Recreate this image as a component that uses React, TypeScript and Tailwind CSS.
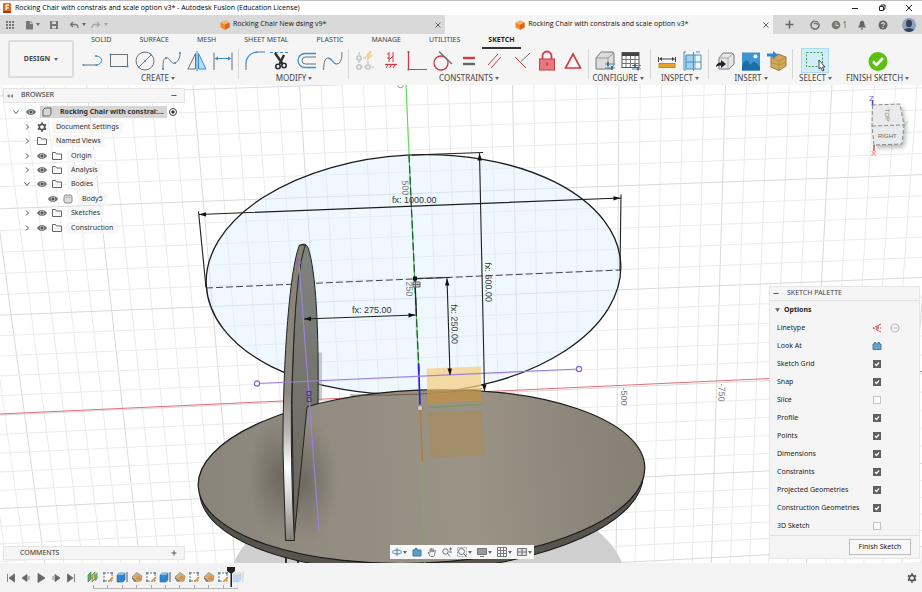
import { useState } from "react";
import type { ReactNode } from "react";
import clsx from "clsx";

const BLUE = "#3b8fd0";
const GRAY = "#6b7075";
const RED = "#cf3a43";

function Caret({ className }: { className?: string }) {
  return (
    <svg viewBox="0 0 4 3" className={clsx("shrink-0", className ?? "h-[3px] w-1")} fill="#666" aria-hidden="true">
      <path d="M0 0h4L2 3z" />
    </svg>
  );
}

function Dot({ x, y, c = BLUE }: { x: number; y: number; c?: string }) {
  return <circle cx={x} cy={y} r="1.1" fill={c} stroke="none" />;
}

const toolIcons: Record<string, ReactNode> = {
  line: (
    <>
      <path d="M1.5 15H14.5" stroke={GRAY} />
      <path d="M14.5 15C21 14 22 7 14 6" stroke={BLUE} />
      <Dot x={1.5} y={15} />
      <Dot x={14.5} y={15} />
      <Dot x={14} y={6} />
    </>
  ),
  rectangle: (
    <>
      <rect x="2.5" y="4.5" width="17" height="12" stroke={GRAY} />
      <Dot x={2.5} y={4.5} />
      <Dot x={19.5} y={16.5} />
    </>
  ),
  circle: (
    <>
      <circle cx="11" cy="11" r="9" stroke={GRAY} />
      <path d="M5 17L17 5" stroke={BLUE} />
      <Dot x={5} y={17} />
      <Dot x={11} y={11} />
      <Dot x={17} y={5} />
    </>
  ),
  spline: (
    <>
      <path d="M3 19C3 13 3 9 6 8C10 7 11 15 15 13C19 11 20 7 20 3" stroke={GRAY} />
      <Dot x={3} y={19} />
      <Dot x={6} y={8} />
      <Dot x={15} y={13} />
      <Dot x={20} y={3} />
    </>
  ),
  mirror: (
    <>
      <path d="M9.5 3.5V19H2z" stroke={GRAY} />
      <path d="M12.5 3.5V19H20z" stroke={BLUE} fill="#b9dcf3" />
      <path d="M11 1V21" stroke={BLUE} />
    </>
  ),
  dimension: (
    <>
      <path d="M2 2.5V20M20 2.5V20" stroke={GRAY} />
      <path d="M3 8.5H19" stroke={BLUE} />
      <path d="M2.5 8.5L6 6.5V10.5zM19.5 8.5L16 6.5V10.5z" fill={BLUE} />
    </>
  ),
  fillet: (
    <>
      <path d="M2 20V14" stroke={GRAY} />
      <path d="M2 14C2 7 7 2 14 2" stroke={BLUE} strokeWidth="1.3" />
      <path d="M14 2H21" stroke={GRAY} />
    </>
  ),
  trim: (
    <>
      <path d="M0 2.5H20" stroke={BLUE} strokeDasharray="3 2" />
      <path d="M5 3L13 14.5M14 5L9.5 14" stroke="#2d2d2d" strokeWidth="2.4" />
      <circle cx="8" cy="16.5" r="2.2" stroke="#2d2d2d" strokeWidth="1.6" />
      <circle cx="14" cy="15.5" r="2.2" stroke="#2d2d2d" strokeWidth="1.6" />
    </>
  ),
  offset: (
    <>
      <path d="M20 3.5H9a7 7 0 0 0 0 14H20" stroke={BLUE} strokeWidth="1.3" />
      <path d="M20 7H9.5a3.5 3.5 0 0 0 0 7H20" stroke={GRAY} />
    </>
  ),
  curve: (
    <>
      <path d="M1.5 20C2 12 3 8 6 8" stroke={GRAY} />
      <path d="M6 8C10 8 11 14 14.5 14" stroke={BLUE} strokeWidth="1.3" />
      <path d="M14.5 14C19 14 20 8 20 2" stroke={GRAY} />
    </>
  ),
  autoConstrain: (
    <g opacity="0.45">
      <path d="M5 2V20M2 17H20M5 8H14V17" stroke={GRAY} strokeDasharray="3 1" />
      <path d="M3 6h4v4H3zM3 15h4v4H3zM12 15h4v4h-4z" stroke={GRAY} fill="#e5e5e5" />
      <path d="M15 1L11 7H14L12 12L19 5H16L18 1z" fill="#f0b429" />
    </g>
  ),
  vertical: (
    <>
      <path d="M9 2V12M13 2V12M9 4H7M9 8H7M13 6L9 10" stroke={RED} />
      <path d="M5 14.5H17" stroke={RED} strokeWidth="1.3" />
      <path d="M6 18L8 15M9.5 18L11.5 15M13 18L15 15" stroke={RED} />
    </>
  ),
  coincident: (
    <>
      <path d="M2.5 2V19.5" stroke={RED} strokeWidth="1.3" />
      <path d="M2.5 19.5H21" stroke={GRAY} />
      <Dot x={2.5} y={2} c={RED} />
      <Dot x={2.5} y={19.5} c={GRAY} />
    </>
  ),
  tangent: (
    <>
      <circle cx="9" cy="13" r="7" stroke={RED} strokeWidth="1.3" />
      <path d="M7 1.5L20 14" stroke={GRAY} strokeWidth="1.3" />
    </>
  ),
  equal: (
    <>
      <path d="M5 8H17" stroke={RED} strokeWidth="2.4" />
      <path d="M5 14H17" stroke="#666" strokeWidth="2.4" />
    </>
  ),
  parallel: (
    <>
      <path d="M4 15L14 4" stroke={RED} />
      <path d="M7 18L17 7" stroke={RED} />
    </>
  ),
  perpendicular: (
    <>
      <path d="M20 3L11 11.5" stroke={GRAY} />
      <path d="M5 7L16 18" stroke={RED} />
    </>
  ),
  lock: (
    <>
      <path d="M6.5 9V6a4.5 4.5 0 0 1 9 0V9" stroke={RED} strokeWidth="1.8" />
      <rect x="3.5" y="9" width="15" height="11" fill="#e77880" stroke={RED} />
      <path d="M11 12V16" stroke={RED} strokeWidth="1.4" />
    </>
  ),
  symmetry: <path d="M11 4L18.5 18H3.5z" stroke={RED} strokeWidth="1.6" />,
  configure: (
    <>
      <path d="M2 8L7 2H19L20 4V15L17 19H2z" fill="#dcdddf" stroke="#777" />
      <path d="M2 8H14V19M14 8L19.5 3" stroke="#999" />
      <path d="M11 14H21M11 18H21" stroke={BLUE} />
      <path d="M14 12V16M18 16V20" stroke="#444" strokeWidth="1.3" />
    </>
  ),
  table: (
    <>
      <rect x="2" y="2.5" width="17" height="15" fill="#fff" stroke="#555" />
      <path d="M2 4.5H19" stroke="#444" strokeWidth="3" />
      <path d="M2 9.5H19M2 13.5H19M6 6V17M10.5 6V17M15 6V17" stroke="#777" />
      <path d="M12 15.5H21M12 19H21" stroke={BLUE} />
      <path d="M15 14V17M18 17.5V20.5" stroke="#444" strokeWidth="1.3" />
    </>
  ),
  measure: (
    <>
      <path d="M2.5 7V12M19.5 7V12M4 9H18" stroke="#444" />
      <path d="M3 9L6 7V11zM19 9L16 7V11z" fill="#444" />
      <rect x="3" y="13.5" width="16" height="4" fill="#e8a62d" stroke="#c98716" />
    </>
  ),
  section: (
    <>
      <path d="M3 5H11V19H3zM11 5H14V19H11z" fill="#9fd0ee" />
      <path d="M4 5H19V19H4zM11.5 2V21M4 12H19" stroke="#4d8fb8" />
      <path d="M4 2H2V20H4M14 2H18" stroke={BLUE} />
    </>
  ),
  derive: (
    <>
      <path d="M5 8L9 3H18L20 5V14L15 19H5z" fill="#e6e7e9" stroke="#777" />
      <path d="M5 8H14L19.5 3.5M14 8V18.5" stroke="#aaa" />
      <path d="M2 17C2 14 4 12.5 7 12.5V10L12 14L7 18V15.5C5 15.5 3 16 2 17z" fill="#222" />
    </>
  ),
  picture: (
    <>
      <rect x="2" y="2.5" width="18" height="18" fill="#3f95d3" />
      <path d="M2 16C5 9 8 9 10 15L13 12C15 11 17 14 20 17V20.5H2z" fill="#1d6ca8" />
      <circle cx="15.5" cy="6.5" r="2" fill="#fff" />
    </>
  ),
  insertBox: (
    <>
      <path d="M5 7L12 4L20 7V16L13 20.5L5 17z" fill="#d3a95a" stroke="#9d7631" />
      <path d="M5 7.5L13 11L20 7.5M13 11V20M5 12L13 15.5L20 12" stroke="#b98d42" />
      <path d="M1 3.5H7V1L12 5L7 9V6.5H1z" fill="#2788d8" />
    </>
  ),
  select: (
    <>
      <rect x="2.5" y="2.5" width="16" height="14" stroke="#3c9d5d" strokeDasharray="2 1.5" />
      <path d="M15 10V19L17 17.5L18.5 21L20 20.2L18.5 17H21z" fill="#fff" stroke="#333" strokeWidth="0.9" />
    </>
  ),
  finish: (
    <>
      <circle cx="11" cy="11.5" r="9.5" fill="#5cc010" />
      <path d="M6 11.5L9.5 15L16 8" stroke="#fff" strokeWidth="2.6" />
    </>
  ),
};

const groups = [
  { label: "Create", tools: ["line", "rectangle", "circle", "spline", "mirror", "dimension"] },
  { label: "Modify", tools: ["fillet", "trim", "offset", "curve"] },
  {
    label: "Constraints",
    tools: ["autoConstrain", "vertical", "coincident", "tangent", "equal", "parallel", "perpendicular", "lock", "symmetry"],
  },
  { label: "Configure", tools: ["configure", "table"], className: "pr-1" },
  { label: "Inspect", tools: ["measure", "section"] },
  { label: "Insert", tools: ["derive", "picture", "insertBox"] },
  { label: "Select", tools: ["select"], className: "ml-[3px]" },
  { label: "Finish Sketch", tools: ["finish"], className: "ml-3.5", plain: true },
];

const workspaceTabs = ["Solid", "Surface", "Mesh", "Sheet Metal", "Plastic", "Manage", "Utilities", "Sketch"];

function CubeLogo() {
  return (
    <svg viewBox="0 0 10 10" className="size-[10px] shrink-0" aria-hidden="true">
      <path d="M5 0.5L9.5 2.5V7.5L5 9.8L0.5 7.5V2.5z" fill="#f08a2c" />
      <path d="M5 0.5L9.5 2.5L5 4.7L0.5 2.5z" fill="#f9b56a" />
      <path d="M5 4.7L9.5 2.5V7.5L5 9.8z" fill="#d9651a" />
    </svg>
  );
}

function TitleBar() {
  return (
    <header className="flex h-[15px] shrink-0 items-center border-t border-[#bdbdbd] bg-white pl-[3px] text-black">
      <svg viewBox="0 0 8 10" className="h-[10px] w-2" aria-hidden="true">
        <rect width="8" height="10" rx="1" fill="#e8651a" />
        <path d="M2.5 1.5H6V3H4V4.2H5.7V5.6H4V7H2.5z" fill="#fff" />
        <path d="M0 8H8V9a1 1 0 0 1-1 1H1a1 1 0 0 1-1-1z" fill="#9c3d0c" />
      </svg>
      <h1 className="ml-1 flex-1 whitespace-nowrap font-['Open_Sans',sans-serif] text-[7px]">
        Rocking Chair with constrais and scale option v3* - Autodesk Fusion (Education License)
      </h1>
      <div className="flex">
        <button aria-label="Minimize" className="flex h-3 w-[27px] items-center justify-center">
          <svg viewBox="0 0 8 8" className="size-2" stroke="#222"><path d="M1 4.5H7" /></svg>
        </button>
        <button aria-label="Restore" className="flex h-3 w-[27px] items-center justify-center">
          <svg viewBox="0 0 8 8" className="size-2" fill="none" stroke="#222"><path d="M1.5 2.5H5.5V6.5H1.5zM3 2.5V1H7V5H5.5" /></svg>
        </button>
        <button aria-label="Close" className="flex h-3 w-[27px] items-center justify-center">
          <svg viewBox="0 0 8 8" className="size-2" stroke="#222"><path d="M1 1L7 7M7 1L1 7" /></svg>
        </button>
      </div>
    </header>
  );
}

function DocumentTab({ name, active }: { name: string; active?: boolean }) {
  return (
    <div className={clsx("flex flex-1 items-center", active ? "bg-[#f5f5f5]" : "bg-[#d9d9d9]")}>
      <button className="flex flex-1 items-center justify-center gap-[3px] whitespace-nowrap font-['Open_Sans',sans-serif] text-[7px] text-[#111]">
        <CubeLogo />
        {name}
      </button>
      <button aria-label={`Close ${name}`} className="flex w-[14px] justify-center">
        <svg viewBox="0 0 6 6" className="size-[6px]" stroke="#666"><path d="M0.5 0.5L5.5 5.5M5.5 0.5L0.5 5.5" /></svg>
      </button>
    </div>
  );
}

function TabBar() {
  return (
    <div className="flex h-[19px] shrink-0 items-stretch bg-[#d9d9d9]">
      <div className="flex w-[116px] items-center pl-[5px]">
        <button aria-label="Data panel" className="mr-[9px]">
          <svg viewBox="0 0 10 10" className="size-[10px]" fill="#777">
            <path d="M1 1h2v2H1zM4 1h2v2H4zM7 1h2v2H7zM1 4h2v2H1zM4 4h2v2H4zM7 4h2v2H7zM1 7h2v2H1zM4 7h2v2H4zM7 7h2v2H7z" />
          </svg>
        </button>
        <button aria-label="File" className="mr-[9px] flex items-center gap-0.5">
          <svg viewBox="0 0 10 10" className="size-[10px]" fill="#777"><path d="M2 1H6V4H9V9.5H2z" /><path d="M6.8 1L9 3.2H6.8z" /></svg>
          <Caret />
        </button>
        <button aria-label="Save" className="mr-[10px]">
          <svg viewBox="0 0 10 10" className="size-[10px]" fill="#777"><path fillRule="evenodd" d="M1 1H9V9H1zM3 1.5V4H7V1.5zM3 6V8.5H7V6z" /></svg>
        </button>
        <button aria-label="Undo" className="mr-[5px] flex items-center gap-[3px]">
          <svg viewBox="0 0 10 10" className="size-[10px]" fill="none" stroke="#777" strokeWidth="1.3"><path d="M4 2L1.5 4.5L4 7M2 4.5H6C8 4.5 9 6 9 8" /></svg>
          <Caret />
        </button>
        <button aria-label="Redo" className="flex items-center gap-[3px] opacity-50">
          <svg viewBox="0 0 10 10" className="size-[10px]" fill="none" stroke="#777" strokeWidth="1.3"><path d="M6 2L8.5 4.5L6 7M8 4.5H4C2 4.5 1 6 1 8" /></svg>
          <Caret />
        </button>
      </div>
      <DocumentTab name="Rocking Chair New dsing v9*" />
      <DocumentTab name="Rocking Chair with constrais and scale option v3*" active />
      <div className="flex w-[149px] items-center justify-between pr-[6px] pl-3">
        <button aria-label="New design">
          <svg viewBox="0 0 9 9" className="size-[9px]" stroke="#666" strokeWidth="1.6"><path d="M4.5 0.5V8.5M0.5 4.5H8.5" /></svg>
        </button>
        <button aria-label="Extensions" className="ml-1.5">
          <svg viewBox="0 0 10 10" className="size-[10px]" fill="none" stroke="#6e6e6e" strokeWidth="1.6"><path d="M4 1.2A4 4 0 1 0 8.9 4" /><path d="M4 4A2 2 0 0 1 7.5 5M4 1.2L7 1.5L8.9 4" strokeWidth="1.2" /></svg>
        </button>
        <button aria-label="Job status" className="flex items-center gap-0.5 text-[8px] text-[#666]">
          <svg viewBox="0 0 10 10" className="size-[10px]"><circle cx="5" cy="5" r="4.3" fill="#777" /><path d="M5 2.5V5.5H7.5" stroke="#ddd" fill="none" /></svg>
          1
        </button>
        <button aria-label="Notifications">
          <svg viewBox="0 0 10 10" className="size-[10px]" fill="#666"><path d="M5 0.5C7 1 7.5 2.5 7.5 5L9 7.5H1L2.5 5C2.5 2.5 3 1 5 0.5zM4 8.2H6V9.5H4z" /></svg>
        </button>
        <button aria-label="Help">
          <svg viewBox="0 0 10 10" className="size-[10px]"><circle cx="5" cy="5" r="4.5" fill="#666" /><path d="M3.5 4C3.5 2.2 6.5 2.2 6.5 4C6.5 5 5 5 5 6.2M5 7V8" stroke="#fff" fill="none" /></svg>
        </button>
        <button aria-label="Account" className="ml-1">
          <svg viewBox="0 0 14 14" className="size-[14px]"><circle cx="7" cy="7" r="7" fill="#8fa3bb" /><ellipse cx="7" cy="5.5" rx="3" ry="3.7" fill="#34435a" /><path d="M2 12C3 9.5 11 9.5 12 12C9 14.5 5 14.5 2 12z" fill="#34435a" /></svg>
        </button>
      </div>
    </div>
  );
}

function Ribbon() {
  const [tab, setTab] = useState("Sketch");
  return (
    <div className="flex h-[51px] shrink-0 bg-[#f5f5f5] pl-2 text-[#444]">
      <button className="mt-1.5 flex h-[38px] w-[66px] shrink-0 items-center justify-center gap-1 rounded-xs border-2 border-[#dcdcdc] text-[7px] font-bold">
        DESIGN
        <Caret />
      </button>
      <div className="ml-1.5 flex flex-1 flex-col">
        <nav className="flex h-[15px] gap-4 pl-[5px]">
          {workspaceTabs.map((name) => (
            <button
              key={name}
              onClick={() => setTab(name)}
              className={clsx(
                "border-b-2 px-1.5 text-[7px] whitespace-nowrap uppercase",
                tab === name ? "border-[#333] font-bold text-[#222]" : "border-transparent"
              )}
            >
              {name}
            </button>
          ))}
        </nav>
        <div className="flex">
          {groups.map((g, i) => (
            <div key={g.label} className="flex">
              {i > 0 && !g.plain && <div className="mr-[3px] ml-0.5 h-[30px] w-px bg-[#d5d5d5]" />}
              <div className={clsx("flex flex-col items-center", g.className)}>
                <div className="flex">
                  {g.tools.map((tool) => (
                    <button
                      key={tool}
                      aria-label={tool}
                      className={clsx("flex h-[23px] w-[26px] items-center justify-center", tool === "select" && "bg-[#d3edf6] outline outline-[#a9dcee]")}
                    >
                      <svg viewBox="0 0 22 22" className="size-[22px]" fill="none">{toolIcons[tool]}</svg>
                    </button>
                  ))}
                </div>
                <button className="flex h-3 items-center gap-0.5 text-[8px] whitespace-nowrap uppercase">
                  {g.label}
                  <Caret />
                </button>
              </div>
            </div>
          ))}
        </div>
      </div>
    </div>
  );
}

// Sketch plane grid, drawn as two families of nearly parallel lines.
const gridColumns = Array.from({ length: 50 }, (_, i) => {
  const k = i - 22;
  const top = 406 + 21.3 * k;
  return { k, d: `M${top} 84L${top + (0.041 - 0.0047 * k) * 486} 570` };
});
const gridRows = Array.from({ length: 30 }, (_, i) => {
  const k = i - 11;
  const mid = 396 - 19 * k - 0.13 * k * k;
  const slope = -0.045 + 0.0008 * k;
  return { k, d: `M-10 ${mid - slope * 424}L932 ${mid + slope * 518}` };
});

function Viewport() {
  return (
    <svg viewBox="0 84 922 479" preserveAspectRatio="xMidYMid slice" className="absolute inset-0 size-full bg-white" fill="none" role="img" aria-label="Rocking chair sketch">
      <defs>
        <linearGradient id="disk" x1="200" x2="645" y1="480" y2="470" gradientUnits="userSpaceOnUse">
          <stop offset="0" stopColor="#8a857a" />
          <stop offset="0.25" stopColor="#918b80" />
          <stop offset="0.6" stopColor="#9a9386" />
          <stop offset="1" stopColor="#857f74" />
        </linearGradient>
        <radialGradient id="contact" cx="0.5" cy="0.5" r="0.5">
          <stop offset="0" stopColor="#4d4842" stopOpacity="0.45" />
          <stop offset="1" stopColor="#4d4842" stopOpacity="0" />
        </radialGradient>
        <linearGradient id="edge" x1="0" x2="0" y1="244" y2="540" gradientUnits="userSpaceOnUse">
          <stop offset="0" stopColor="#857f74" />
          <stop offset="0.5" stopColor="#8f8a80" />
          <stop offset="0.64" stopColor="#bdb9b3" />
          <stop offset="0.75" stopColor="#ffffff" />
          <stop offset="0.84" stopColor="#dedbd8" />
          <stop offset="1" stopColor="#827c72" />
        </linearGradient>
        <linearGradient id="side" x1="0" x2="0" y1="244" y2="540" gradientUnits="userSpaceOnUse">
          <stop offset="0" stopColor="#7f847f" />
          <stop offset="0.5" stopColor="#74736c" />
          <stop offset="1" stopColor="#67635c" />
        </linearGradient>
      </defs>

      {[...gridColumns, ...gridRows].map((line, i) => (
        <path key={i} d={line.d} stroke={line.k % 5 === 0 ? "#dadada" : "#ebebeb"} />
      ))}
      <ellipse cx="428" cy="582" rx="198" ry="100" fill="#cfcfcf" />
      <path d="M0 413.5L922 371" stroke="#e27076" />

      {/* sketch profile */}
      <ellipse cx="413.5" cy="274" rx="207.5" ry="119.5" transform="rotate(-3 413.5 274)" fill="#d9eefc" fillOpacity="0.42" stroke="#1d1d1d" strokeWidth="1.3" />
      <path d="M206 287.5L620 269.5" stroke="#444" strokeDasharray="7 3" />

      {/* seat */}
      <path d="M286 555V570M298 555V570" stroke="#333" strokeWidth="2" />
      <ellipse cx="421.5" cy="482.5" rx="222" ry="88" transform="rotate(-2.5 421.5 482.5)" fill="#57544d" stroke="#1b1b1b" />
      <ellipse cx="421.5" cy="476" rx="223.5" ry="86.5" transform="rotate(-2.5 421.5 476)" fill="url(#disk)" stroke="#1b1b1b" strokeWidth="1.2" />
      <ellipse cx="278" cy="476" rx="30" ry="60" fill="url(#contact)" />
      <ellipse cx="306" cy="480" rx="32" ry="62" fill="url(#contact)" />
      <path d="M317 352H322V400H317z" fill="#999" opacity="0.5" />
      <path d="M350 394.5Q420 396 482 388" stroke="#5b3b36" opacity="0.7" />

      {/* side plate */}
      <path d="M300 245C303 243 306 243 308 247C316 270 319 330 318 403L307 406.5L294 539L292 400C293 340 297 270 300 245z" fill="url(#side)" stroke="#222" />
      <path d="M299.5 244.5C289 270 282.5 370 283 450L285.5 540H294.5C291 480 290.5 410 292.5 370C294.5 310 298 265 305.5 244.5z" fill="url(#edge)" stroke="#222" />

      {/* origin planes and axes */}
      <path d="M426.5 368L481 366L481 389L427 390z" fill="#f7cf85" fillOpacity="0.75" />
      <path d="M427 390L481 389L481 400.5L427 403z" fill="#bd9148" fillOpacity="0.8" />
      <path d="M428 412L482 410L485 455L430 457z" fill="#b8862f" fillOpacity="0.3" />
      <path d="M428 407L482 404" stroke="#7a9b62" strokeWidth="1.5" />
      <path d="M422 460L425 570" stroke="#86a56f" opacity="0.8" />
      <path d="M406 84L409 154" stroke="#4fe04f" />
      <path d="M409 154L419 372" stroke="#3fc24a" />
      <path d="M409 154L419 372" stroke="#1f5a26" strokeDasharray="8 3" strokeWidth="1.2" />
      <path d="M418.5 363L420 404" stroke="#2020e0" strokeWidth="1.6" />
      <path d="M420.5 411L422.5 461" stroke="#b9772e" strokeWidth="1.2" />
      <circle cx="420" cy="407.5" r="2.7" fill="#d8cdb8" stroke="#8f8670" />

      {/* construction line */}
      <path d="M257 383L579 368.5M299 262L319 530" stroke="#9d80dd" strokeWidth="1.2" />
      <circle cx="257" cy="383" r="2.6" fill="#fff" stroke="#8560cf" strokeWidth="1.2" />
      <circle cx="579" cy="368.5" r="2.6" fill="#fff" stroke="#8560cf" strokeWidth="1.2" />
      <circle cx="299" cy="261.5" r="2.3" stroke="#8560cf" />
      <path d="M307 391h4v4h-4zM307 397h4v4h-4z" stroke="#4c3283" />
      <path d="M310 437h4v7h-4z" stroke="#8b78b8" opacity="0.7" />

      {/* dimensions */}
      <g stroke="#1f1f1f" strokeWidth="1.1">
        <path d="M199 214L620.5 197.5M198.5 211L206 287M621 194L620 270" />
        <path d="M479.5 152.5L484.5 390M412 154.5L483 152" />
        <path d="M447 278L450 374M415 278L450 277" />
        <path d="M304 318.5L415.5 314.5M415 278L416.5 316" />
      </g>
      <g fill="#111">
        <path d="M199 214L206 211.7V216zM620.5 197.5L613.5 195.7V200z" />
        <path d="M479.5 152.5L477.5 160H482zM484.5 391L482 384H486.5z" />
        <path d="M447 278L445 285H449.5zM450 375L447.5 368H452z" />
        <path d="M304 318.5L311 316V320.5zM415.5 314.5L408.5 312.5V317z" />
        <rect x="413" y="276" width="4" height="4" />
      </g>
      <path d="M413 281.5h7v5h-7zM415.5 281.5v5M413 284h7" stroke="#666" fill="#ccc" />
      <g className="font-['Liberation_Sans',Arial,sans-serif] text-[9px]" fill="#333">
        <text x="392" y="202">fx: 1000.00</text>
        <text x="352" y="312">fx: 275.00</text>
        <text transform="translate(451 304) rotate(89)">fx: 250.00</text>
        <text transform="translate(485 262) rotate(89)">fx: 600.00</text>
      </g>
      <g className="font-['Liberation_Sans',Arial,sans-serif] text-[9px]" fill="#777">
        <text transform="translate(402 180) rotate(88)">500</text>
        <text transform="translate(406 281) rotate(88)">250</text>
        <text transform="translate(621 387) rotate(90)">-500</text>
        <text transform="translate(719 383) rotate(92)">-750</text>
        <path d="M398 85C398 88 403 88 403 85" stroke="#777" fill="none" />
      </g>
    </svg>
  );
}

function ViewCube() {
  return (
    <svg viewBox="0 0 46 66" className="mt-2 h-[66px] w-[46px]" fill="none" role="img" aria-label="View cube">
      <defs>
        <filter id="cubeShadow" x="-20%" y="-20%" width="150%" height="160%">
          <feDropShadow dx="2" dy="3" stdDeviation="2.5" floodColor="#000" floodOpacity="0.3" />
        </filter>
      </defs>
      <path d="M4.5 7V13" stroke="#4a4ae0" strokeWidth="1.5" />
      <path d="M6 52V58" stroke="#e05555" strokeWidth="1.5" />
      <g filter="url(#cubeShadow)">
        <path d="M4.5 12L32 11L36 32L34 51L6 52L4 33z" fill="#e9eaec" />
      </g>
      <path d="M4.5 12L32 11L36 32L34 51L6 52L4 33zM4 33L36 32" stroke="#888" strokeDasharray="4 2" />
      <g className="font-['Liberation_Sans',Arial,sans-serif]">
        <text x="10" y="45" fill="#666" className="text-[6px]">RIGHT</text>
        <text transform="translate(17 16) rotate(88)" fill="#777" className="text-[6px]">TOP</text>
        <text x="1" y="8" fill="#5a5ae6" className="text-[8px]">Z</text>
        <text x="3" y="63" fill="#e56060" className="text-[8px]">X</text>
        <text x="35" y="33" fill="#7fdc8f" className="text-[8px]">Y</text>
      </g>
    </svg>
  );
}

function Chevron({ open }: { open?: boolean }) {
  return (
    <svg viewBox="0 0 6 6" className="size-[6px]" fill="none" stroke="#555">
      <path d={open ? "M0.5 1.5L3 4.5L5.5 1.5" : "M2 0.5L4.5 3L2 5.5"} />
    </svg>
  );
}

function Eye() {
  return (
    <svg viewBox="0 0 10 8" className="h-2 w-[10px] shrink-0">
      <path d="M0 4C2.5 0 7.5 0 10 4C7.5 8 2.5 8 0 4z" fill="#666" />
      <circle cx="5" cy="4" r="2" fill="#555" stroke="#eee" strokeWidth="0.7" />
    </svg>
  );
}

function Gear() {
  return (
    <svg viewBox="0 0 10 10" className="size-[10px] shrink-0" fill="none" stroke="#555">
      <circle cx="5" cy="5" r="2.7" strokeWidth="1.7" />
      <path d="M5 0.3V2M5 8V9.7M0.9 2.6L2.4 3.5M7.6 6.5L9.1 7.4M0.9 7.4L2.4 6.5M7.6 3.5L9.1 2.6" strokeWidth="1.8" />
    </svg>
  );
}

function NodeIcon({ kind }: { kind: string }) {
  if (kind === "gear") return <Gear />;
  return (
    <svg viewBox="0 0 10 10" className="size-[10px] shrink-0" fill="none" stroke="#666">
      {kind === "folder" && <path d="M0.5 1.5H3.5L4.5 3H9.5V8.5H0.5z" />}
      {kind === "body" && <><rect x="1" y="1" width="8" height="8" rx="2" fill="#ddd" stroke="#888" /><path d="M1 3.5H9" stroke="#bbb" /></>}
      {kind === "component" && <path d="M1 3L3 1H9V7L7.5 9H1z" strokeLinejoin="round" />}
    </svg>
  );
}

const nodes = [
  { name: "Document Settings", icon: "gear" },
  { name: "Named Views", icon: "folder" },
  { name: "Origin", icon: "folder", eye: true },
  { name: "Analysis", icon: "folder", eye: true },
  { name: "Bodies", icon: "folder", eye: true, open: true },
  { name: "Body5", icon: "body", eye: true, leaf: true },
  { name: "Sketches", icon: "folder", eye: true },
  { name: "Construction", icon: "folder", eye: true },
];

function Browser() {
  return (
    <section className="text-[#333]">
      <header className="flex h-[15px] items-center border border-[#e3e3e3] bg-[#f5f5f5] pr-[7px] pl-[3px] text-[7px]">
        <svg viewBox="0 0 6 4" className="mr-2 h-1 w-[6px]" fill="#777"><path d="M0 2L2.5 0V4zM3.5 2L6 0V4z" /></svg>
        <h2 className="flex-1">BROWSER</h2>
        <button aria-label="Collapse browser">
          <svg viewBox="0 0 6 6" className="size-[6px]" stroke="#555"><path d="M0.5 2.5H5.5" /></svg>
        </button>
      </header>
      <ul className="mt-0.5 grid h-[130px] grid-rows-9 text-[7px] whitespace-nowrap">
        <li className="flex items-center pl-[10px]">
          <button aria-label="Collapse" className="mr-[7px]"><Chevron open /></button>
          <Eye />
          <span className="ml-1 flex h-3 w-[127px] items-center gap-2 bg-[#d6d6d6] pl-0.5 font-bold">
            <NodeIcon kind="component" />
            <span>Rocking Chair with constrai:...</span>
          </span>
          <input type="radio" defaultChecked aria-label="Activate component" className="ml-[2px] size-2 appearance-none rounded-full border border-[#444] bg-[radial-gradient(#333_35%,white_40%)]" />
        </li>
        {nodes.map((n) => (
          <li key={n.name} className={clsx("flex items-center", n.leaf ? "pl-[45px]" : "pl-[21px]")}>
            {!n.leaf && <button aria-label={`Toggle ${n.name}`} className="mr-[7px]"><Chevron open={n.open} /></button>}
            {n.eye && <span className="mr-[5px] flex"><Eye /></span>}
            <NodeIcon kind={n.icon} />
            <span className="ml-[5px] bg-[#f7f7f7] px-1 leading-3">
              {n.name}
            </span>
          </li>
        ))}
      </ul>
    </section>
  );
}

function NavBar() {
  const items = [
    { id: "Orbit", caret: true, icon: <><ellipse cx="5" cy="5" rx="4.5" ry="2" stroke={BLUE} /><path d="M5 1V9" stroke={GRAY} /></> },
    { id: "Look at", icon: <path d="M1 3H3V1.5H5V3H9V9H1z" fill="#5b9fc9" stroke="#41789b" /> },
    { id: "Pan", icon: <path d="M3 9L1 5.5L3 6V2M3 5L4 1L5 5L6.2 1.5L6.5 5L8.5 3L7.5 8L6.5 9.5H3.5" stroke="#888" /> },
    { id: "Zoom", icon: <><circle cx="3.5" cy="4.5" r="2.7" stroke={GRAY} /><path d="M5.5 6.5L8 9.5M7 2H10M8.5 0.5V3.5M7 5H10" stroke={GRAY} /></> },
    { id: "Fit", caret: true, icon: <><path d="M0.5 0.5H9.5V9.5H0.5z" stroke="#aaa" strokeDasharray="2 1" /><circle cx="4.5" cy="4.5" r="3" stroke={GRAY} /><path d="M6.5 6.5L9.5 9.5" stroke={GRAY} /></> },
    { id: "Display", caret: true, icon: <><path d="M0.5 1.5H9.5V7.5H0.5z" fill="#999" stroke="#777" /><path d="M3 9.5H7" stroke="#777" /></> },
    { id: "Grid", caret: true, icon: <path d="M0.5 0.5H9.5V9.5H0.5zM3.5 0.5V9.5M6.5 0.5V9.5M0.5 3.5H9.5M0.5 6.5H9.5" stroke="#777" /> },
    { id: "Viewports", caret: true, icon: <path d="M0.5 1.5H9.5V8.5H0.5zM5 1.5V8.5M0.5 5H9.5" fill="#ddd" stroke="#777" /> },
  ];
  return (
    <div className="mb-1 flex h-[14px] items-center gap-[5px] self-end bg-[#f7f7f7] px-0.5">
      {items.map((item) => (
        <button key={item.id} aria-label={item.id} className="flex items-center gap-px">
          <svg viewBox="0 0 10 10" className="size-[10px]" fill="none">{item.icon}</svg>
          {item.caret && <Caret />}
        </button>
      ))}
    </div>
  );
}

const paletteOptions = [
  { name: "Sketch Grid", on: true },
  { name: "Snap", on: true },
  { name: "Slice", on: false },
  { name: "Profile", on: true },
  { name: "Points", on: true },
  { name: "Dimensions", on: true },
  { name: "Constraints", on: true },
  { name: "Projected Geometries", on: true },
  { name: "Construction Geometries", on: true },
  { name: "3D Sketch", on: false },
];

function SketchPalette() {
  const [options, setOptions] = useState(paletteOptions);
  const toggle = (name: string) => setOptions(options.map((o) => (o.name === name ? { ...o, on: !o.on } : o)));

  return (
    <section className="border border-[#e6e6e6] bg-[#f5f5f5] text-[7px] text-[#222]">
      <header className="flex h-[14px] items-center gap-2 border-b border-[#e0e0e0] pl-[3px] text-[#444]">
        <button aria-label="Collapse palette">
          <svg viewBox="0 0 6 6" className="size-[6px]" stroke="#555"><path d="M0.5 2.5H5.5" /></svg>
        </button>
        <h2>SKETCH PALETTE</h2>
      </header>
      <button className="flex h-[18px] items-center gap-1 pl-[5px] font-bold">
        <Caret className="h-1 w-[5px]" />
        Options
      </button>
      <div className="flex h-[18px] items-center pl-[7px]">
        <span className="w-[95px]">Linetype</span>
        <button aria-label="Construction" className="mr-2">
          <svg viewBox="0 0 10 10" className="size-[10px]" fill="none" stroke={RED}><path d="M9 1L1 5L9 9M4 5H9M6 2.5V7.5" strokeDasharray="3 1" /></svg>
        </button>
        <button aria-label="Centerline">
          <svg viewBox="0 0 10 10" className="size-[10px]" fill="none" stroke="#bbb"><circle cx="5" cy="5" r="4" /><path d="M0 5H10" strokeDasharray="3 1" /></svg>
        </button>
      </div>
      <div className="flex h-[18px] items-center pl-[7px]">
        <span className="w-[95px]">Look At</span>
        <button aria-label="Look At">
          <svg viewBox="0 0 10 10" className="size-[10px]" fill="#68a6cc" stroke="#457c9f"><path d="M1 3H2.5V1.5H4V3H6V1.5H7.5V3H9V8.5H1z" /></svg>
        </button>
      </div>
      {options.map((o) => (
        <label key={o.name} className="flex h-[18px] items-center pl-[7px]">
          <span className="w-24 whitespace-nowrap">{o.name}</span>
          <span className="relative flex">
            <input
              type="checkbox"
              checked={o.on}
              onChange={() => toggle(o.name)}
              className="size-2 appearance-none border border-[#c4c4c4] bg-white checked:border-[#606060] checked:bg-[#606060]"
            />
            {o.on && (
              <svg viewBox="0 0 8 8" className="pointer-events-none absolute inset-0 size-2" fill="none" stroke="#fff" strokeWidth="1.2">
                <path d="M2 4L3.5 5.5L6 2.5" />
              </svg>
            )}
          </span>
        </label>
      ))}
      <footer className="flex justify-end border-t border-[#e0e0e0] py-[3px] pr-2">
        <button className="h-4 w-[62px] border border-[#bdbdbd] bg-[#f8f8f8] text-[7px]">Finish Sketch</button>
      </footer>
    </section>
  );
}

const featureIcons: Record<string, ReactNode> = {
  plane: <><path d="M1 4L4 1V8L1 11z" fill="#5fae6d" stroke="#3d8a4c" strokeWidth="0.7" /><path d="M5 4L8 1V8L5 11z" fill="#e8b35a" stroke="#3d8a4c" strokeWidth="0.7" /><path d="M8 3.5L10.5 1V8L8 10.5z" fill="#5fae6d" /></>,
  sketch: <><path d="M2 2H10V10H2z" stroke="#777" strokeDasharray="2 1" fill="#fff" /><path d="M1 1h2v2H1zM9 1h2v2H9zM1 9h2v2H1z" fill="#5b95c4" /><path d="M6 10L10.5 5.5L11.5 7L7.5 11z" fill="#e6932c" /></>,
  extrude: <><path d="M1 4L3 2H9V9L7 11H1z" fill="#2f87cf" stroke="#1f6bab" strokeWidth="0.6" /><path d="M1 4L3 2H9L7 4z" fill="#85bfe8" /><path d="M11 1V11" stroke="#555" /></>,
  revolve: <><path d="M1 6L6 1.5L11 5L10 10L3 10.5z" fill="#cdb48b" stroke="#8c8068" strokeWidth="0.7" /><path d="M4 7L8 4L11 8L7 10z" fill="#e0924d" /><path d="M1 7L5 10" stroke="#666" /></>,
};
const timeline = ["plane", "sketch", "extrude", "revolve", "sketch", "extrude", "revolve", "sketch", "revolve", "sketch", "extrude"];

const transport = [
  { name: "Go to start", d: "M1.5 1V9M8.5 1V9L3 5z" },
  { name: "Step back", d: "M6 1.5V8.5L1 5zM8 3V7" },
  { name: "Play", d: "M2 0.5V9.5L9 5z" },
  { name: "Step forward", d: "M4 1.5V8.5L9 5zM2 3V7" },
  { name: "Go to end", d: "M8.5 1V9M1.5 1V9L7 5z" },
];

function Timeline() {
  return (
    <footer className="flex h-[29px] shrink-0 items-center bg-[#f3f3f3] pr-[5px] pl-1.5">
      <div className="flex w-20 gap-[5px]">
        {transport.map((t) => (
          <button key={t.name} aria-label={t.name}>
            <svg viewBox="0 0 10 10" className="size-[10px]" fill="#666" stroke="#666"><path d={t.d} strokeWidth="0.8" /></svg>
          </button>
        ))}
      </div>
      <div className="relative mt-1 grid w-[159px] grid-cols-11">
        {timeline.map((f, i) => (
          <button key={i} aria-label={`${f} ${i + 1}`} className={clsx("flex flex-col items-center", i === 10 && "opacity-25")}>
            <svg viewBox="0 0 12 12" className="size-3" fill="none">{featureIcons[f]}</svg>
            <span className="mt-0.5 h-1 w-px bg-[#aaa]" />
          </button>
        ))}
        <div className="absolute inset-x-[7px] bottom-0 h-px bg-[#b5b5b5]" />
        <svg viewBox="0 0 8 20" className="absolute -top-1 left-[141px] h-5 w-2" fill="#222" aria-hidden="true">
          <path d="M0 0H8V4L5 6.5V20H3.5V6.5L0 4z" />
        </svg>
      </div>
      <button aria-label="Timeline settings" className="ml-auto">
        <Gear />
      </button>
    </footer>
  );
}

export default function App() {
  return (
    <div className="flex h-screen flex-col overflow-hidden bg-[#f5f5f5] font-['Noto_Sans',sans-serif]">
      <TitleBar />
      <TabBar />
      <Ribbon />
      <main className="relative min-h-0 flex-1">
        <Viewport />
        <div className="relative grid h-full grid-cols-[1fr_auto_1fr] pr-[2px] pl-[3px]">
          <div className="flex w-[182px] flex-col justify-between py-[3px]">
            <Browser />
            <section className="flex h-[14px] items-center border border-[#e6e6e6] bg-[#f5f5f5] pr-[7px] pl-4 text-[7px] text-[#333]">
              <h2 className="flex-1">COMMENTS</h2>
              <button aria-label="Add comment">
                <svg viewBox="0 0 6 6" className="size-[6px]" stroke="#555"><path d="M3 0.5V5.5M0.5 3H5.5" /></svg>
              </button>
            </section>
          </div>
          <NavBar />
          <div className="flex w-[151px] flex-col justify-between justify-self-end pb-1">
            <div className="flex justify-end pr-1.5">
              <ViewCube />
            </div>
            <SketchPalette />
          </div>
        </div>
      </main>
      <Timeline />
    </div>
  );
}
